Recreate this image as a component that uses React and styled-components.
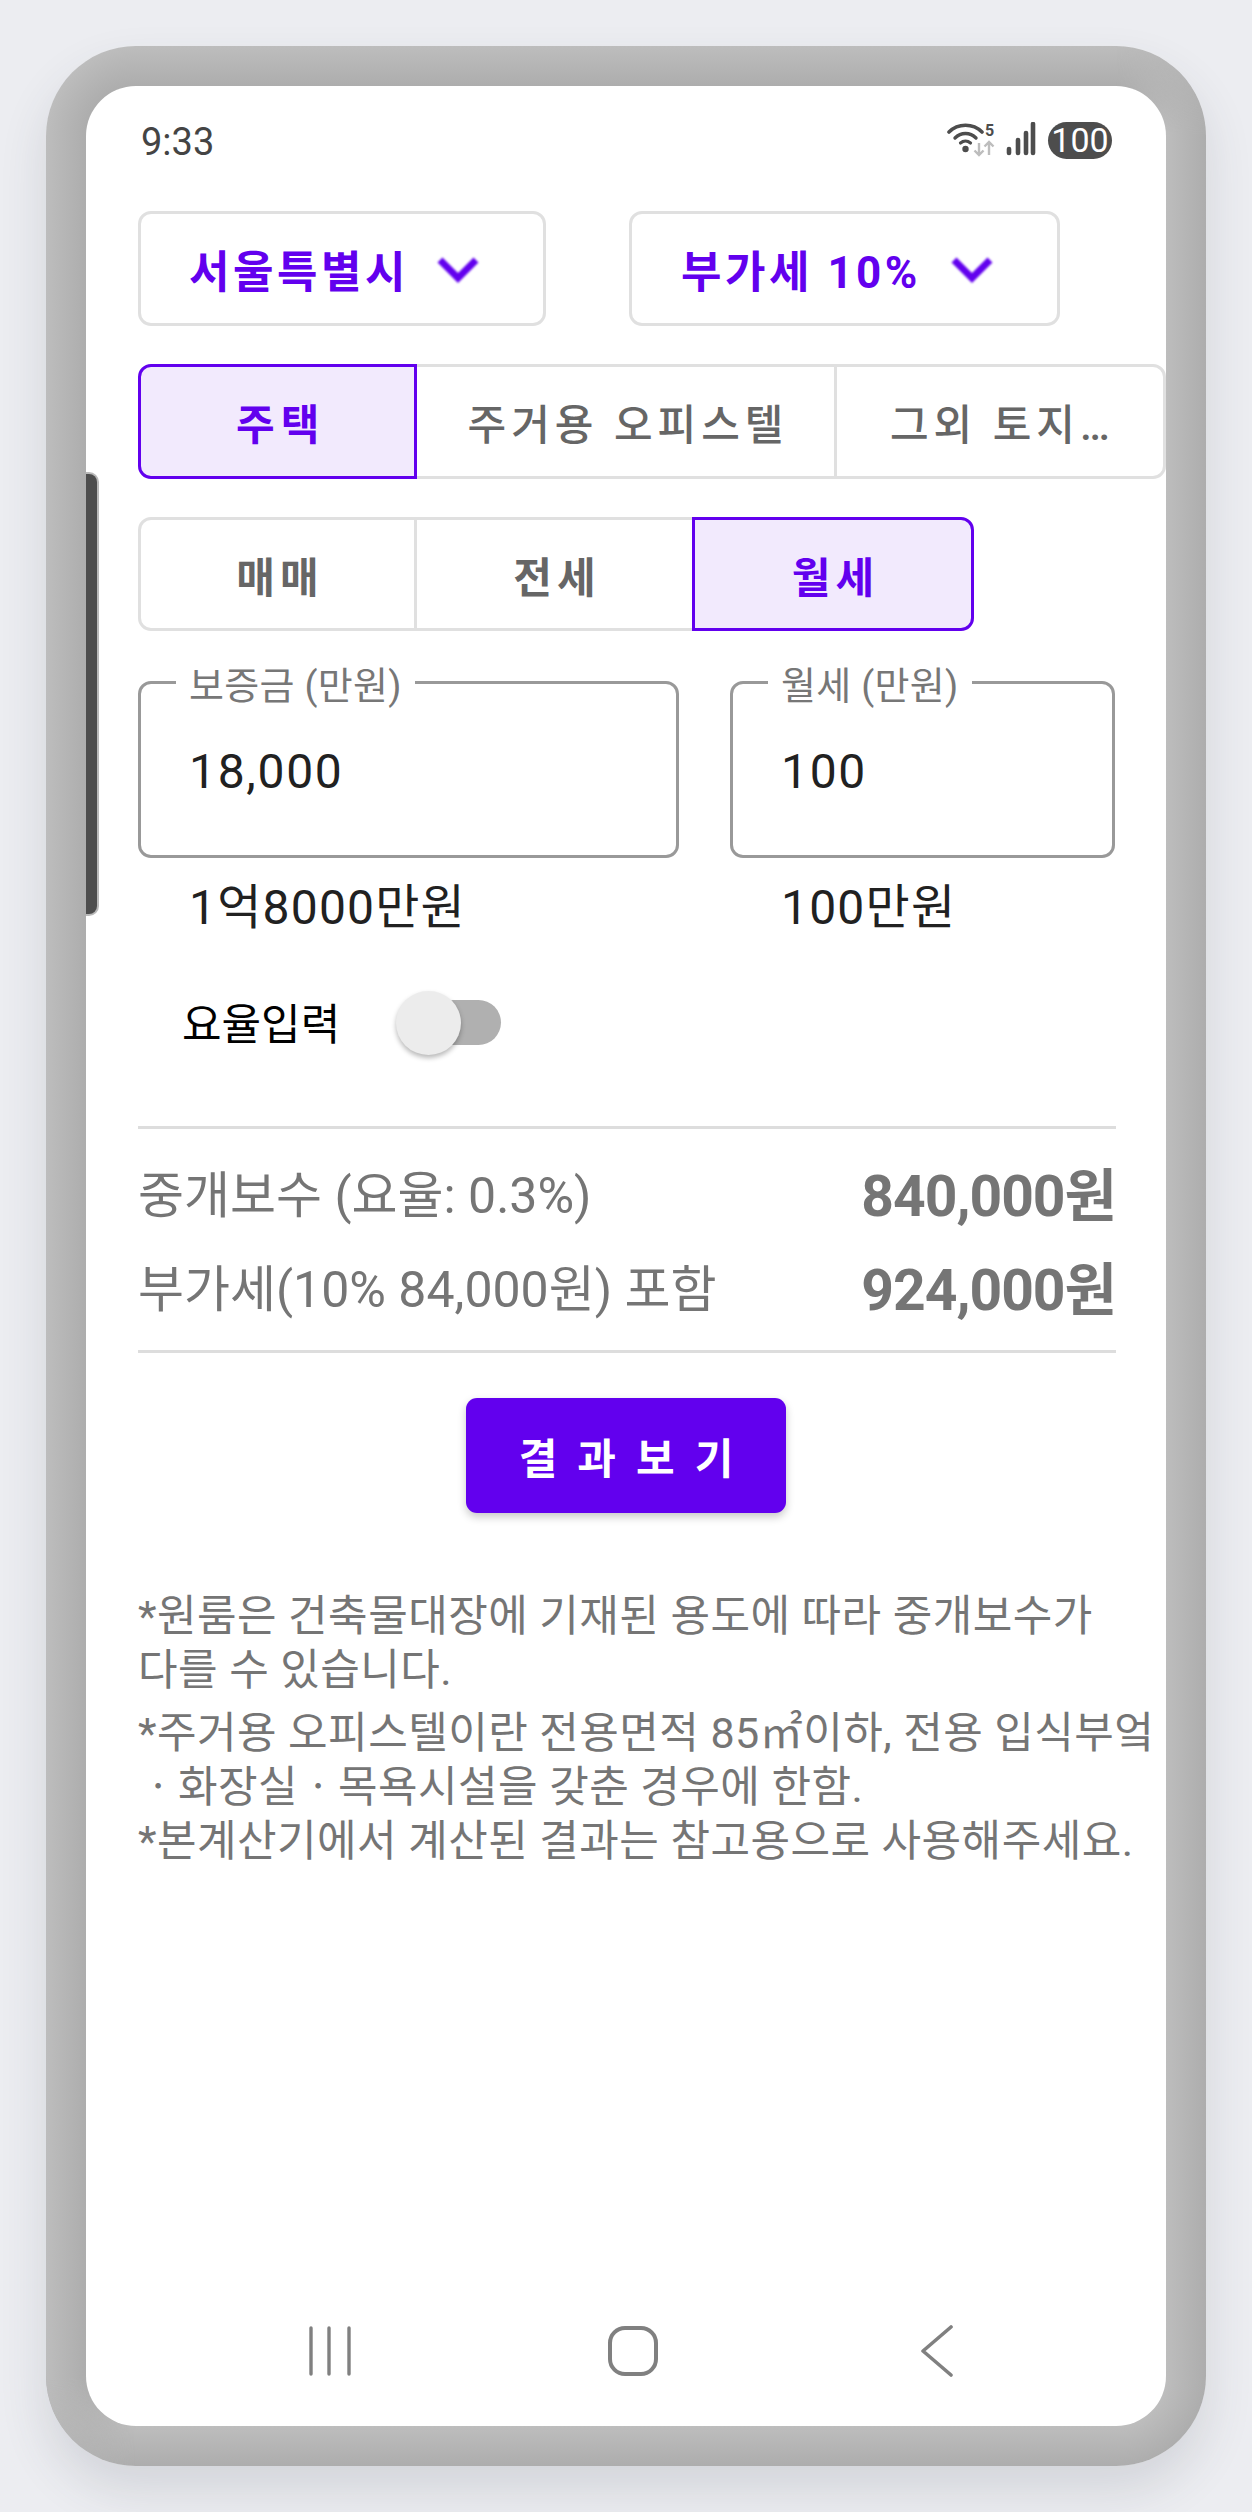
import React from "react"
import styled, { createGlobalStyle } from "styled-components"

const GlobalStyle = createGlobalStyle`
  html, body {
    margin: 0;
    padding: 0;
    background: #ecedf1;
  }
  * {
    box-sizing: border-box;
  }
  body {
    font-family: Roboto, "Noto Sans CJK KR", sans-serif;
  }
`

const Page = styled.div`
  width: 1252px;
  height: 2512px;
  padding: 46px;
  background: #ecedf1;
  overflow: hidden;
`

// the two corners where the bevel flips get an overlay faded in with a conic mask
const Frame = styled.div`
  position: relative;
  width: 1160px;
  height: 2420px;
  padding: 40px;
  border-radius: 90px;
  box-shadow: 0 24px 48px rgba(60, 64, 80, 0.14);
  background:
    linear-gradient(180deg, #bdbdbd, #adadad) 90px 0 / 980px 40px no-repeat,
    linear-gradient(0deg, #adadad, #bdbdbd) 90px 100% / 980px 40px no-repeat,
    linear-gradient(90deg, #bdbdbd, #adadad) 0 90px / 40px 2240px no-repeat,
    linear-gradient(90deg, #bdbdbd, #adadad) 100% 90px / 40px 2240px no-repeat,
    radial-gradient(circle at 90px 90px, #adadad 50px, #bdbdbd 90px) 0 0 / 90px 90px no-repeat,
    radial-gradient(circle at 0 90px, #adadad 50px, #bdbdbd 90px) 100% 0 / 90px 90px no-repeat,
    radial-gradient(circle at 90px 0, #bdbdbd 50px, #adadad 90px) 0 100% / 90px 90px no-repeat,
    radial-gradient(circle at 0 0, #bdbdbd 50px, #adadad 90px) 100% 100% / 90px 90px no-repeat;

  &::before {
    content: "";
    position: absolute;
    top: 0;
    right: 0;
    width: 90px;
    height: 90px;
    border-top-right-radius: 90px;
    background: radial-gradient(circle at 0 90px, #bdbdbd 50px, #adadad 90px);
    mask-image: conic-gradient(from 0deg at 0 90px, transparent 0deg, #000 90deg);
  }

  &::after {
    content: "";
    position: absolute;
    bottom: 0;
    left: 0;
    width: 90px;
    height: 90px;
    border-bottom-left-radius: 90px;
    background: radial-gradient(circle at 90px 0, #adadad 50px, #bdbdbd 90px);
    mask-image: conic-gradient(from 180deg at 90px 0, transparent 0deg, #000 90deg);
  }
`

const Screen = styled.div`
  position: relative;
  z-index: 1;
  display: flex;
  flex-direction: column;
  width: 1080px;
  height: 2340px;
  background: #fff;
  border-radius: 50px;
  overflow: hidden;
`

const SideHandle = styled.div`
  position: absolute;
  left: 0;
  top: 386px;
  width: 13px;
  height: 444px;
  background: #4d4d4d;
  border: 2px solid #b9b9b9;
  border-left: 0;
  border-radius: 0 10px 10px 0;
`

const StatusBar = styled.div`
  display: flex;
  align-items: flex-start;
  justify-content: space-between;
  height: 125px;
  padding: 33px 54px 0 55px;
`

const Clock = styled.div`
  font-size: 38px;
  line-height: 46px;
  font-weight: 400;
  color: #444;
`

const StatusIcons = styled.div`
  display: flex;
  align-items: flex-start;
  margin-top: 3px;
`

const Battery = styled.div`
  width: 64px;
  height: 37px;
  margin-left: 12px;
  border-radius: 19px;
  background: #4d4d4d;
  color: #fff;
  font-size: 34px;
  line-height: 37px;
  font-weight: 400;
  text-align: center;
`

const Content = styled.div`
  display: flex;
  flex-direction: column;
  padding-left: 52px;
`

const DropdownRow = styled.div`
  display: flex;
  gap: 83px;
`

const Dropdown = styled.div`
  display: flex;
  align-items: center;
  width: ${(p) => p.$width}px;
  height: 115px;
  padding-left: ${(p) => p.$pad}px;
  border: 3px solid #e0e0e0;
  border-radius: 13px;
  color: #6200ee;
  font-size: 44px;
  font-weight: 700;
  letter-spacing: ${(p) => p.$spacing}px;
  white-space: nowrap;
`

const Chevron = styled.svg`
  flex: none;
  margin-left: ${(p) => p.$gap}px;
  filter: blur(0.8px);
`

const SegmentRow = styled.div`
  display: flex;
  margin-top: 38px;
`

const Segment = styled.div`
  display: flex;
  align-items: center;
  justify-content: center;
  width: ${(p) => p.$width}px;
  height: ${(p) => p.$height}px;
  margin-left: ${(p) => (p.$first ? 0 : -3)}px;
  padding-left: ${(p) => p.$spacing}px;
  border: 3px solid ${(p) => (p.$active ? "#6200ee" : "#e0e0e0")};
  border-radius: ${(p) => (p.$first ? "13px 0 0 13px" : p.$last ? "0 13px 13px 0" : "0")};
  background: ${(p) => (p.$active ? "#f2eafd" : "#fff")};
  color: ${(p) => (p.$active ? "#6200ee" : "#666")};
  font-size: 42px;
  font-weight: ${(p) => p.$weight || 700};
  letter-spacing: ${(p) => p.$spacing}px;
  white-space: nowrap;
  z-index: ${(p) => (p.$active ? 1 : 0)};
`

const FieldGrid = styled.div`
  display: grid;
  grid-template-columns: 541px 385px;
  column-gap: 51px;
  margin-top: 50px;
`

const Field = styled.div`
  position: relative;
  display: flex;
  align-items: center;
  height: 177px;
  padding-left: ${(p) => p.$pad}px;
  padding-top: 3px;
  border: 3px solid #999;
  border-radius: 13px;
  font-size: 48px;
  letter-spacing: 1.7px;
  color: #212121;
`

const FieldLabel = styled.span`
  position: absolute;
  left: ${(p) => p.$left}px;
  top: -21px;
  padding: 0 13px;
  background: #fff;
  color: #777;
  font-size: 38px;
  line-height: 46px;
  letter-spacing: 0.3px;
  white-space: nowrap;
`

const Hint = styled.div`
  margin-top: 26px;
  padding-left: ${(p) => p.$pad}px;
  font-size: 48px;
  line-height: 48px;
  letter-spacing: 1.2px;
  color: #212121;
`

const ToggleRow = styled.div`
  display: flex;
  align-items: center;
  height: 64px;
  margin-top: 58px;
  padding-left: 44px;
  color: #000;
  font-size: 43px;
`

const ToggleLabel = styled.span`
  margin-bottom: 3px;
`

const ToggleTrack = styled.div`
  position: relative;
  width: 101px;
  height: 45px;
  margin-left: 60px;
  border-radius: 23px;
  background: #b0b0b0;
`

const ToggleThumb = styled.div`
  position: absolute;
  left: -4px;
  top: -9px;
  width: 65px;
  height: 64px;
  border-radius: 50%;
  background: #ececec;
  box-shadow: 0 3px 5px rgba(0, 0, 0, 0.28);
`

const Summary = styled.div`
  width: 978px;
  margin-top: 72px;
  padding: 15px 0 18px;
  border-top: 3px solid #ddd;
  border-bottom: 3px solid #ddd;
`

const SummaryRow = styled.div`
  display: flex;
  align-items: center;
  justify-content: space-between;
  height: 94px;
  color: #757575;
  font-size: 50px;
  white-space: nowrap;
`

const Amount = styled.span`
  font-size: 57px;
  font-weight: 700;
  letter-spacing: -1px;
`

const ResultButton = styled.div`
  align-self: center;
  display: flex;
  align-items: center;
  justify-content: center;
  width: 320px;
  height: 115px;
  margin: 45px 0 0 -52px;
  border-radius: 11px;
  background: #6200ee;
  box-shadow: 0 4px 8px rgba(0, 0, 0, 0.22);
  color: #fff;
  font-size: 42px;
  font-weight: 700;
  letter-spacing: 20px;
  padding-left: 20px;
  white-space: nowrap;
`

const Notes = styled.div`
  margin-top: 76px;
  color: #757575;
  font-size: 43px;
  line-height: 54px;
  letter-spacing: 0.45px;
  white-space: nowrap;
`

const NoteBlock = styled.div`
  margin-top: ${(p) => p.$gap || 0}px;
`

const NavBar = styled.div`
  display: flex;
  align-items: center;
  justify-content: space-between;
  margin-top: auto;
  height: 52px;
  margin-bottom: 49px;
  padding: 0 212px 0 222px;
`

const NavIcon = styled.svg`
  display: block;
  margin-left: ${(p) => p.$shift || 0}px;
`

const SignalSvg = styled.svg`
  margin-left: 9px;
`

const WifiIcon = () => (
  <svg width="50" height="36" viewBox="0 0 50 36">
    <g fill="none" stroke="#4d4d4d" strokeLinecap="round">
      <path d="M2 10 C11 1 26 1 35 10" strokeWidth="3.6" />
      <path d="M8 16 C14 10 23 10 29 16" strokeWidth="3.4" />
      <path d="M13.5 21 C16.5 18.5 20.5 18.5 23.5 21" strokeWidth="3.2" />
    </g>
    <circle cx="18.5" cy="27" r="3.2" fill="#4d4d4d" />
    <text x="38" y="14" fontSize="16" fontWeight="700" fill="#4d4d4d" fontFamily="Roboto, sans-serif">
      5
    </text>
    <g fill="none" stroke="#bdbdbd" strokeWidth="2.4">
      <path d="M32 21 V33 M27.5 28.5 L32 33 L36.5 28.5" />
      <path d="M42 33 V20 M37.5 24.5 L42 20 L46.5 24.5" />
    </g>
  </svg>
)

const SignalIcon = () => (
  <SignalSvg width="30" height="34" viewBox="0 0 30 34">
    <g stroke="#4d4d4d" strokeWidth="4.6" strokeLinecap="round">
      <line x1="3" y1="27" x2="3" y2="31" />
      <line x1="12" y1="18" x2="12" y2="31" />
      <line x1="20" y1="11" x2="20" y2="31" />
      <line x1="27" y1="2" x2="27" y2="31" />
    </g>
  </SignalSvg>
)

const ChevronDown = ({ gap }) => (
  <Chevron $gap={gap} width="42" height="28" viewBox="0 0 42 28">
    <path d="M3 5 L21 23 L39 5" fill="none" stroke="#6200ee" strokeWidth="7" />
  </Chevron>
)

const App = () => {
  return (
    <Page>
      <GlobalStyle />
      <Frame>
        <Screen>
          <SideHandle />
          <StatusBar>
            <Clock>9:33</Clock>
            <StatusIcons>
              <WifiIcon />
              <SignalIcon />
              <Battery>100</Battery>
            </StatusIcons>
          </StatusBar>
          <Content>
            <DropdownRow>
              <Dropdown $width={408} $pad={48} $spacing={3.5}>
                서울특별시
                <ChevronDown gap={28} />
              </Dropdown>
              <Dropdown $width={431} $pad={49} $spacing={3.5}>
                부가세 10%
                <ChevronDown gap={30} />
              </Dropdown>
            </DropdownRow>
            <SegmentRow>
              <Segment $first $active $width={280} $height={115} $spacing={6}>
                주택
              </Segment>
              <Segment $weight={500} $width={423} $height={115} $spacing={5}>
                주거용 오피스텔
              </Segment>
              <Segment $weight={500} $last $width={333} $height={115} $spacing={5}>
                그외 토지…
              </Segment>
            </SegmentRow>
            <SegmentRow>
              <Segment $first $width={279} $height={114} $spacing={5}>
                매매
              </Segment>
              <Segment $width={281} $height={114} $spacing={5}>
                전세
              </Segment>
              <Segment $last $active $width={282} $height={114} $spacing={5}>
                월세
              </Segment>
            </SegmentRow>
            <FieldGrid>
              <Field $pad={48}>
                <FieldLabel $left={35}>보증금 (만원)</FieldLabel>
                18,000
              </Field>
              <Field $pad={48}>
                <FieldLabel $left={35}>월세 (만원)</FieldLabel>
                100
              </Field>
              <Hint $pad={51}>1억8000만원</Hint>
              <Hint $pad={51}>100만원</Hint>
            </FieldGrid>
            <ToggleRow>
              <ToggleLabel>요율입력</ToggleLabel>
              <ToggleTrack>
                <ToggleThumb />
              </ToggleTrack>
            </ToggleRow>
            <Summary>
              <SummaryRow>
                <span>중개보수 (요율: 0.3%)</span>
                <Amount>840,000원</Amount>
              </SummaryRow>
              <SummaryRow>
                <span>부가세(10% 84,000원) 포함</span>
                <Amount>924,000원</Amount>
              </SummaryRow>
            </Summary>
            <ResultButton>결과보기</ResultButton>
            <Notes>
              <NoteBlock>
                *원룸은 건축물대장에 기재된 용도에 따라 중개보수가
                <br />
                다를 수 있습니다.
              </NoteBlock>
              <NoteBlock $gap={9}>
                *주거용 오피스텔이란 전용면적 85㎡이하, 전용 입식부엌
                <br />
                ㆍ화장실ㆍ목욕시설을 갖춘 경우에 한함.
                <br />
                *본계산기에서 계산된 결과는 참고용으로 사용해주세요.
              </NoteBlock>
            </Notes>
          </Content>
          <NavBar>
            <NavIcon width="44" height="50" viewBox="0 0 44 50">
              <g stroke="#808080" strokeWidth="3.4" strokeLinecap="round">
                <line x1="3" y1="2" x2="3" y2="48" />
                <line x1="21" y1="2" x2="21" y2="48" />
                <line x1="41" y1="2" x2="41" y2="48" />
              </g>
            </NavIcon>
            <NavIcon $shift={-6} width="52" height="52" viewBox="0 0 52 52">
              <rect x="3" y="3" width="46" height="46" rx="15" fill="none" stroke="#808080" strokeWidth="4" />
            </NavIcon>
            <NavIcon width="34" height="52" viewBox="0 0 34 52">
              <path d="M31 2 L3 26 L31 50" fill="none" stroke="#808080" strokeWidth="3.6" strokeLinecap="round" strokeLinejoin="round" />
            </NavIcon>
          </NavBar>
        </Screen>
      </Frame>
    </Page>
  )
}

export default App
